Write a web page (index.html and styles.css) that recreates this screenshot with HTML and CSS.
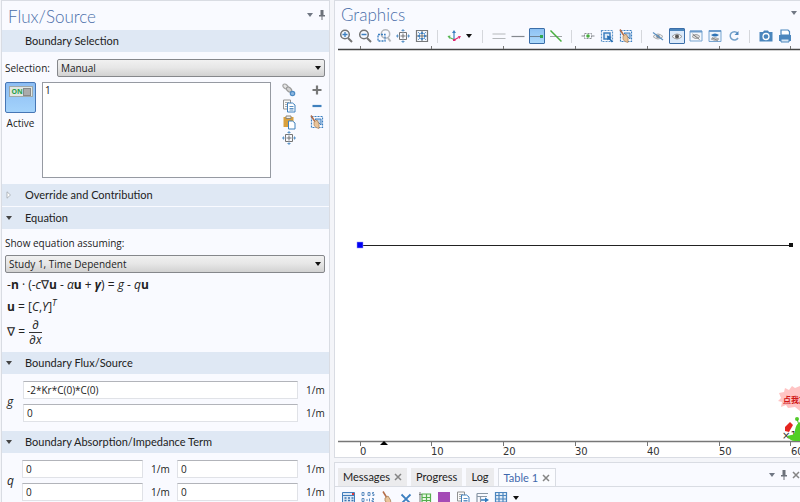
FILE: index.html
```
<!DOCTYPE html>
<html lang="en">
<head>
    <meta charset="UTF-8">
    <meta name="viewport" content="width=device-width, initial-scale=1.0">
    <title>Flux/Source</title>
    <link rel="stylesheet" href="styles.css">
</head>
<body>
    <!-- Icon set -->
    <svg class="icon-defs" aria-hidden="true">
        <symbol id="caret" viewBox="0 0 8 8"><path d="M1 2h6L4 6z" fill="currentColor"/></symbol>
        <symbol id="pin" viewBox="0 0 8 12"><path d="M2.500 1h3v5H7v1.500H1V6h1.500z" fill="#6c717a"/><path d="M4 7v4" stroke="#6c717a"/></symbol>
        <symbol id="close" viewBox="0 0 8 8"><path d="M1 1l6 6M7 1L1 7" stroke="#858585" stroke-width="1.500"/></symbol>
        <symbol id="closed" viewBox="0 0 8 8"><path d="M2 .8L5.500 4 2 7.200z" fill="#fff" stroke="#a2a8ae" stroke-width=".8"/></symbol>
        <symbol id="zoom-in" viewBox="0 0 16 16"><circle cx="7" cy="6.500" r="4.300" fill="#f5f9ff" stroke="#747474" stroke-width="1.500"/><path d="M10 10l4 4" stroke="#747474" stroke-width="2"/><path d="M4.500 6.500h5M7 4v5" stroke="#3c7fc0" stroke-width="1.300"/></symbol>
        <symbol id="zoom-out" viewBox="0 0 16 16"><circle cx="7" cy="6.500" r="4.300" fill="#f5f9ff" stroke="#747474" stroke-width="1.500"/><path d="M10 10l4 4" stroke="#747474" stroke-width="2"/><path d="M4.500 6.500h5" stroke="#3c7fc0" stroke-width="1.500"/></symbol>
        <symbol id="zoom-box" viewBox="0 0 16 16"><circle cx="9.500" cy="6" r="4.200" fill="none" stroke="#b4b7bb" stroke-width="1.500"/><path d="M12 10l2.500 3.500" stroke="#b4b7bb" stroke-width="2"/><path d="M2 6.500h7v6.500H2z" fill="none" stroke="#3c7fc0" stroke-width="1.300" stroke-dasharray="2 1"/></symbol>
        <symbol id="extents" viewBox="0 0 16 16"><path d="M4.500 4.500h7v7h-7zM8 5.500v5M5.500 8h5" fill="none" stroke="#747474"/><path d="M8 2.500v2M8 11.500v2M2.500 8h2M11.500 8h2" stroke="#9ab8d6"/><path d="M8 1l2 2H6zM8 15l-2-2h4zM1 8l2-2v4zM15 8l-2-2v4z" fill="#5d95ca"/></symbol>
        <symbol id="fit" viewBox="0 0 16 16"><path d="M2.500 2.500h11v11h-11z" fill="#f4f8fd" stroke="#77797c" stroke-width="1.200"/><path d="M8 3v10M3 8h10" stroke="#747474"/><path d="M8 3.500L10 6H6zM8 12.500L6 10h4zM3.500 8L6 6v4zM12.500 8L10 6v4z" fill="#3c7fc0"/><path d="M4 4l2 2M12 4l-2 2M4 12l2-2M12 12l-2-2" stroke="#6f9dcd"/></symbol>
        <symbol id="axes" viewBox="0 0 16 16"><path d="M8 11V4" stroke="#3c7fc0" stroke-width="1.200"/><path d="M8 2l2 3H6z" fill="#3c7fc0"/><path d="M8 11.500L3.500 9.500" stroke="#58b653" stroke-width="1.200"/><path d="M1.500 8l3-.5-1 3.500z" fill="#58b653"/><path d="M8 12l4.500-2.500" stroke="#e02771" stroke-width="1.200"/><path d="M15 8l-3.200.2 1.500 2.800zM7 11h2.500v2H7z" fill="#e02771"/></symbol>
        <symbol id="lines" viewBox="0 0 16 16"><path d="M1.500 6h13M1.500 10.500h13" stroke="#b5b8bb" stroke-width="1.200"/></symbol>
        <symbol id="line" viewBox="0 0 16 16"><path d="M1.500 8.500h13" stroke="#85898e" stroke-width="1.200"/></symbol>
        <symbol id="line-end" viewBox="0 0 14 14"><path d="M0 7.500h11" stroke="#6d8296"/><rect x="10" y="6" width="3" height="3" fill="#32a852"/></symbol>
        <symbol id="line-cut" viewBox="0 0 16 16"><path d="M2 8.500h12" stroke="#a0a4a7"/><path d="M2.500 2.500l11 11" stroke="#48ae3f" stroke-width="1.500"/></symbol>
        <symbol id="select-point" viewBox="0 0 16 16"><path d="M1.500 8h3M11.500 8h3" stroke="#85898e"/><path d="M4.500 5.500h7v5h-7z" fill="none" stroke="#8b8e92" stroke-dasharray="2 1"/><circle cx="8" cy="8" r="1.800" fill="#48ae3f"/></symbol>
        <symbol id="select-box" viewBox="0 0 16 16"><path d="M2.500 2.500h11v11h-11z" fill="none" stroke="#5f95cb" stroke-width="1.200" stroke-dasharray="2 1"/><path d="M5 5h6v6H5z" fill="#dce9f6" stroke="#3c7fc0" stroke-width="1.500"/><path d="M8 7.500l5 1.500-2 1 3 3.500-1.200 1-3-3.500-1.300 1.500z" fill="#286fb3"/></symbol>
        <symbol id="select-clear" viewBox="0 0 16 16"><path d="M2.500 2.500h11v11h-11z" fill="none" stroke="#3c7fc0" stroke-width="1.200" stroke-dasharray="2 1"/><path d="M6 5h6v6z" fill="#bcd4ed" stroke="#3c7fc0"/><path d="M2 1.500l4.500 7" stroke="#b46c47" stroke-width="1.500"/><path d="M5 8l3-2q3 3.500 2 8.500-3-.5-5-3z" fill="#e9c49a" stroke="#a98159" stroke-width=".7"/></symbol>
        <symbol id="hide" viewBox="0 0 16 16"><path d="M3 8.500q5-5 10 0-5 5-10 0z" fill="#e9eaec" stroke="#a9acb0"/><circle cx="8" cy="8.500" r="1.800" fill="#8b8e92"/><path d="M3 4.500l10 7.500" stroke="#5c91c3" stroke-width="1.200"/></symbol>
        <symbol id="show" viewBox="0 0 14 14"><path d="M0 1h14" stroke="#4c86bd" stroke-width="2"/><path d="M2 7.500q5-5 10 0-5 5-10 0z" fill="#f1f2f3" stroke="#888" stroke-width=".8"/><circle cx="7" cy="7.500" r="2" fill="#555"/></symbol>
        <symbol id="show-hidden" viewBox="0 0 16 16"><path d="M2 3h12v10H2z" fill="#f5f8fc" stroke="#78a5d1"/><path d="M2 3.500h12" stroke="#6b9bcb" stroke-width="2"/><path d="M4 8.500q4-4 8 0-4 4-8 0z" fill="#ddd" stroke="#a0a0a0"/><path d="M4.500 6l7 5.500" stroke="#777"/></symbol>
        <symbol id="show-both" viewBox="0 0 16 16"><path d="M2 2.500h12v11H2z" fill="#edf4fb" stroke="#78a5d1"/><path d="M2 3h12" stroke="#6b9bcb" stroke-width="2"/><path d="M4 7q4-3 8 0-4 3-8 0z" fill="#2e73b5"/><path d="M4 11q4-3 8 0-4 3-8 0z" fill="#ccc" stroke="#999" stroke-width=".7"/><path d="M5 9.500l6 3.500" stroke="#777" stroke-width=".8"/></symbol>
        <symbol id="refresh" viewBox="0 0 16 16"><path d="M11.500 5A4.200 4.200 0 1 0 12 10" fill="none" stroke="#74a1ca" stroke-width="1.500"/><path d="M12.500 3v4h-4z" fill="#5089bf"/></symbol>
        <symbol id="camera" viewBox="0 0 16 16"><path d="M1.500 4H5l1-1.500h4L11 4h3.500v9.500h-13z" fill="#4b86bd"/><circle cx="8" cy="8.500" r="3" fill="#4b86bd" stroke="#fff" stroke-width="1.300"/></symbol>
        <symbol id="printer" viewBox="0 0 16 16"><path d="M4 7V2h7l1.500 1.500V7z" fill="#fff" stroke="#4b86bd" stroke-width="1.200"/><path d="M2 7h12v6H2z" fill="#4b86bd"/><path d="M4 11h8v3H4z" fill="#d9e8f6" stroke="#4b86bd"/></symbol>
        <symbol id="chain" viewBox="0 0 16 16"><ellipse cx="4.500" cy="4.500" rx="3" ry="2" transform="rotate(40 4.500 4.500)" fill="#e4e4e4" stroke="#a4a4a4" stroke-width="1.200"/><ellipse cx="8" cy="7.500" rx="3" ry="2" transform="rotate(40 8 7.500)" fill="#d2d2d2" stroke="#9a9a9a" stroke-width="1.200"/><circle cx="11.500" cy="11.500" r="2.200" fill="#8db6df" stroke="#4d8bc4" stroke-width="1.200"/></symbol>
        <symbol id="copy" viewBox="0 0 16 16"><path d="M2.500 2h7v9h-7z" fill="#fafafa" stroke="#929292"/><path d="M4 4.500h4M4 6.500h3M4 8.500h3" stroke="#aaa"/><path d="M6.500 5h5l2.500 2v7H6.500z" fill="#fff" stroke="#3f80bd"/><path d="M8.500 8.500h4M8.500 10.500h4M8.500 12h4" stroke="#5d91c4"/></symbol>
        <symbol id="paste" viewBox="0 0 16 16"><path d="M2.500 3h10v10h-10z" fill="#d9a03d"/><path d="M5 2h5v2.500H5z" fill="#eee" stroke="#8d8577"/><path d="M7.500 7h4l2.500 2v6H7.500z" fill="#fff" stroke="#3f80bd"/></symbol>
        <symbol id="plus" viewBox="0 0 16 16"><path d="M8 3.500v9M3.500 8h9" stroke="#777" stroke-width="2.200"/></symbol>
        <symbol id="minus" viewBox="0 0 16 16"><path d="M3.500 8h9" stroke="#3f80bd" stroke-width="2.200"/></symbol>
        <symbol id="calc" viewBox="0 0 16 16"><path d="M1.500 2.500h12v12h-12z" fill="#dce8f5" stroke="#427ebb"/><path d="M2 5.500h11" stroke="#427ebb"/><path d="M3.500 8h2M7 8h2M10.500 8h2M3.500 10.500h2M7 10.500h2M10.500 10.500h2" stroke="#3c74b0" stroke-width="1.500"/><path d="M11 3h2v2h-2z" fill="#e03b3b"/></symbol>
        <symbol id="digits" viewBox="0 0 16 16"><path d="M2 2.500h2v3H2zM8 2.500h2v3H8zM12.500 2.500H14M12.500 2.500V4H14v1.500h-1.500M2 8.500h2v3H2zM6 10h2M9.500 8.500v3M12 8.500h1.500V10H12v1.500h2" fill="none" stroke="#5b8cc0"/></symbol>
        <symbol id="broom" viewBox="0 0 16 16"><path d="M4 1.500l4 6.500" stroke="#b46c47" stroke-width="1.500"/><path d="M6 8l3-2q3.500 4 3 8-3.500 0-6-3z" fill="#e9c49a" stroke="#a98159" stroke-width=".8"/></symbol>
        <symbol id="delete" viewBox="0 0 16 16"><path d="M3.500 4.500l9 9M12.500 4.500l-9 9" stroke="#3c7fc0" stroke-width="1.800"/></symbol>
        <symbol id="table-graph" viewBox="0 0 16 16"><path d="M3 2v12M2 4.500h3" stroke="#777"/><path d="M5 4h8.500v10H5zM9.500 4v10M5 7.500h8M5 10.500h8" fill="#eaf8e7" stroke="#54ae4d" stroke-width="1.200"/></symbol>
        <symbol id="purple" viewBox="0 0 16 16"><path d="M2 2h12v14H2z" fill="#a44bb6"/></symbol>
        <symbol id="export" viewBox="0 0 16 16"><path d="M3 3.500h11M3 3.500v11M3 6.500h10M6.500 6.500v8h4" fill="none" stroke="#8997a6" stroke-width="1.200"/><path d="M7 10h5" stroke="#2f79bd" stroke-width="1.500"/><path d="M11 7.500l4 2.500-4 2.500z" fill="#2f79bd"/></symbol>
        <symbol id="grid" viewBox="0 0 16 16"><path d="M2.500 2.500h11v12h-11zM6 2.500v12M10 2.500v12M2 5.500h12M2 9h12M2 12h12" fill="#e4eef8" stroke="#4d86bf" stroke-width="1.200"/></symbol>
    </svg>

    <main class="workspace">
        <!-- Settings -->
        <section class="panel settings">
            <header class="panel-head">
                <h1 class="panel-title">Flux/Source</h1>
                <div class="panel-tools">
                    <button class="mini" aria-label="Panel menu"><svg class="small"><use href="#caret"/></svg></button>
                    <button class="mini" aria-label="Pin"><svg class="pin"><use href="#pin"/></svg></button>
                </div>
            </header>

            <h2 class="section-head"><span class="section-text">Boundary Selection</span></h2>
            <div class="selection">
                <div class="selection-row">
                    <label for="selection">Selection:</label>
                    <div class="combo">
                        <select id="selection"><option>Manual</option></select>
                    </div>
                </div>
                <div class="selection-body">
                    <div class="active">
                        <button class="toggle" id="active" aria-pressed="true" aria-labelledby="active-label"><span class="switch">ON<span class="knob"></span></span></button>
                        <label for="active" id="active-label">Active</label>
                    </div>
                    <select class="list" size="6" aria-label="Selected boundaries"><option>1</option></select>
                    <div class="list-tools">
                        <button class="tool" aria-label="Activate selection"><svg><use href="#chain"/></svg></button>
                        <button class="tool" aria-label="Add"><svg><use href="#plus"/></svg></button>
                        <button class="tool" aria-label="Copy"><svg><use href="#copy"/></svg></button>
                        <button class="tool" aria-label="Remove"><svg><use href="#minus"/></svg></button>
                        <button class="tool" aria-label="Paste"><svg><use href="#paste"/></svg></button>
                        <button class="tool" aria-label="Clear"><svg><use href="#select-clear"/></svg></button>
                        <button class="tool" aria-label="Zoom to selection"><svg><use href="#extents"/></svg></button>
                    </div>
                </div>
            </div>

            <h2 class="section-head"><button class="section-toggle" aria-expanded="false"><svg class="small"><use href="#closed"/></svg>Override and Contribution</button></h2>
            <h2 class="section-head"><button class="section-toggle" aria-expanded="true"><svg class="small"><use href="#caret"/></svg>Equation</button></h2>
            <div class="equation">
                <label for="study">Show equation assuming:</label>
                <div class="combo">
                    <select id="study"><option>Study 1, Time Dependent</option></select>
                </div>
                <div class="math"><span>-<b>n</b> · (-<i>c</i>∇<b>u</b> - <i>α</i><b>u</b> + <i><b>γ</b></i>) = <i>g</i> - <i>q</i><b>u</b></span></div>
                <div class="math"><span><b>u</b> = [<i>C</i>,<i>Y</i>]<sup><i>T</i></sup></span></div>
                <div class="math nabla"><span>∇ =</span><span class="fraction"><i>∂</i><i class="under">∂x</i></span></div>
            </div>

            <h2 class="section-head"><button class="section-toggle" aria-expanded="true"><svg class="small"><use href="#caret"/></svg>Boundary Flux/Source</button></h2>
            <div class="fields one">
                <i class="symbol">g</i>
                <input type="text" id="g1" aria-label="g, first" value="-2*Kr*C(0)*C(0)"><label for="g1">1/m</label>
                <input type="text" id="g2" aria-label="g, second" value="0"><label for="g2">1/m</label>
            </div>

            <h2 class="section-head"><button class="section-toggle" aria-expanded="true"><svg class="small"><use href="#caret"/></svg>Boundary Absorption/Impedance Term</button></h2>
            <div class="fields two">
                <i class="symbol">q</i>
                <input type="text" id="q11" aria-label="q 11" value="0"><label for="q11">1/m</label>
                <input type="text" id="q12" aria-label="q 12" value="0"><label for="q12">1/m</label>
                <input type="text" id="q21" aria-label="q 21" value="0"><label for="q21">1/m</label>
                <input type="text" id="q22" aria-label="q 22" value="0"><label for="q22">1/m</label>
            </div>
        </section>

        <div class="side">
            <!-- Graphics -->
            <section class="panel graphics">
                <header class="panel-head">
                    <h1 class="panel-title">Graphics</h1>
                    <div class="panel-tools">
                        <button class="mini" aria-label="Panel menu"><svg class="small"><use href="#caret"/></svg></button>
                    </div>
                </header>
                <div class="toolbar">
                    <button class="tool" aria-label="Zoom in"><svg><use href="#zoom-in"/></svg></button>
                    <button class="tool" aria-label="Zoom out"><svg><use href="#zoom-out"/></svg></button>
                    <button class="tool" aria-label="Zoom box"><svg><use href="#zoom-box"/></svg></button>
                    <button class="tool" aria-label="Zoom selected"><svg><use href="#extents"/></svg></button>
                    <button class="tool" aria-label="Zoom extents"><svg><use href="#fit"/></svg></button>
                    <span class="divider"></span>
                    <button class="tool" aria-label="View"><svg><use href="#axes"/></svg></button>
                    <button class="tool drop" aria-label="View menu"><svg class="small"><use href="#caret"/></svg></button>
                    <span class="divider"></span>
                    <button class="tool" aria-label="Select objects"><svg><use href="#lines"/></svg></button>
                    <button class="tool" aria-label="Select domains"><svg><use href="#line"/></svg></button>
                    <button class="tool filled" aria-label="Select boundaries" aria-pressed="true"><svg><use href="#line-end"/></svg></button>
                    <button class="tool" aria-label="Select none"><svg><use href="#line-cut"/></svg></button>
                    <span class="divider"></span>
                    <button class="tool" aria-label="Select point"><svg><use href="#select-point"/></svg></button>
                    <button class="tool" aria-label="Select box"><svg><use href="#select-box"/></svg></button>
                    <button class="tool" aria-label="Deselect box"><svg><use href="#select-clear"/></svg></button>
                    <span class="divider"></span>
                    <button class="tool" aria-label="Hide"><svg><use href="#hide"/></svg></button>
                    <button class="tool outlined" aria-label="View unhidden" aria-pressed="true"><svg><use href="#show"/></svg></button>
                    <button class="tool" aria-label="View hidden"><svg><use href="#show-hidden"/></svg></button>
                    <button class="tool" aria-label="View all"><svg><use href="#show-both"/></svg></button>
                    <button class="tool" aria-label="Reset hiding"><svg><use href="#refresh"/></svg></button>
                    <span class="divider"></span>
                    <button class="tool" aria-label="Image snapshot"><svg><use href="#camera"/></svg></button>
                    <button class="tool" aria-label="Print"><svg><use href="#printer"/></svg></button>
                </div>
                <svg class="plot" viewBox="0 0 465 411" role="img" aria-label="Interval from 0 to 60">
                    <path d="M0 4h465v407H0z" fill="#fff"/>
                    <path d="M3 3.500h462" stroke="#444" stroke-width="1.500"/>
                    <path d="M25.500 0v3M96.500 0v3M168.500 0v3M240.500 0v3M312.500 0v3M384.500 0v3M455.500 0v3" stroke="#777"/>
                    <path d="M25 199.500h431" stroke="#222"/>
                    <rect x="22" y="196" width="6" height="6" fill="#0000f5" stroke="#9a9af5" stroke-width=".5"/>
                    <rect x="454" y="197" width="4" height="4" fill="#111"/>
                    <path d="M3 395.500h462" stroke="#777" stroke-width="1.500"/>
                    <path d="M25.500 396v4M96.500 396v4M168.500 396v4M240.500 396v4M312.500 396v4M384.500 396v4M455.500 396v4" stroke="#777"/>
                    <path d="M49 395l-4 4h8z" fill="#000"/>
                    <g class="ticks">
                        <text x="25" y="409">0</text>
                        <text x="96" y="409">10</text>
                        <text x="168" y="409">20</text>
                        <text x="240" y="409">30</text>
                        <text x="312" y="409">40</text>
                        <text x="384" y="409">50</text>
                        <text x="456" y="409">60</text>
                        <text x="447" y="393">×1</text>
                    </g>
                    <!-- mascot -->
                    <path d="M444 347l5-1 1-4 4 2 3-4 3 2 5-2v25l-5-4-7 1-2-3-5 2 1-5-4-1 3-3z" fill="#ffc4c4"/>
                    <text class="bubble" x="448" y="357">点我加</text>
                    <path d="M450 381l5-5 3 3-4 7-4-1z" fill="#e52520"/>
                    <circle cx="462" cy="373" r="2" fill="#55cb2c"/>
                    <path d="M462 373l2 6" stroke="#48be20"/>
                    <path d="M465 376q-4 2-5 8 0 5-4 5l-4 1q3 5 8 5h5z" fill="#52cf25"/>
                </svg>
            </section>

            <!-- Results -->
            <section class="panel results">
                <div class="tabs">
                    <button class="tab">Messages<svg class="small"><use href="#close"/></svg></button>
                    <button class="tab">Progress</button>
                    <button class="tab">Log</button>
                    <button class="tab current">Table 1<svg class="small"><use href="#close"/></svg></button>
                    <div class="tab-tools">
                        <button class="mini" aria-label="Panel menu"><svg class="small"><use href="#caret"/></svg></button>
                        <button class="mini" aria-label="Pin"><svg class="pin"><use href="#pin"/></svg></button>
                        <button class="mini" aria-label="Close"><svg class="small"><use href="#close"/></svg></button>
                    </div>
                </div>
                <div class="toolbar">
                    <button class="tool" aria-label="Evaluate"><svg><use href="#calc"/></svg></button>
                    <button class="tool" aria-label="Precision"><svg><use href="#digits"/></svg></button>
                    <button class="tool" aria-label="Clear table"><svg><use href="#broom"/></svg></button>
                    <button class="tool" aria-label="Delete table"><svg><use href="#delete"/></svg></button>
                    <button class="tool" aria-label="Table graph"><svg><use href="#table-graph"/></svg></button>
                    <button class="tool" aria-label="Table surface"><svg><use href="#purple"/></svg></button>
                    <button class="tool" aria-label="Copy table"><svg><use href="#copy"/></svg></button>
                    <button class="tool" aria-label="Export"><svg><use href="#export"/></svg></button>
                    <button class="tool" aria-label="Display table"><svg><use href="#grid"/></svg></button>
                    <button class="tool drop" aria-label="Table menu"><svg class="small"><use href="#caret"/></svg></button>
                </div>
            </section>
        </div>
    </main>
</body>
</html>
```

FILE: styles.css
```
/* Base */
* {
    margin: 0;
    padding: 0;
    box-sizing: border-box;
}

body {
    height: 100vh;
    overflow: hidden;
    background: #f4f5f9;
    color: #222;
    font-family: "Open Sans", "Noto Sans", "Noto Sans CJK SC", sans-serif;
    font-size: 10px;
    line-height: 14px;
}

button,
input,
select {
    font: inherit;
    color: inherit;
}

button {
    border: 0;
    background: none;
}

svg {
    display: block;
    width: 16px;
    height: 16px;
}

.icon-defs {
    display: none;
}

.small {
    width: 8px;
    height: 8px;
    flex: none;
}

.pin {
    width: 8px;
    height: 12px;
}

/* Panels */
.workspace {
    display: grid;
    grid-template-columns: minmax(0, 33fr) minmax(0, 47fr);
    height: 100%;
}

.panel {
    background: #f9faff;
    border: 1px solid #d9dce3;
}

.settings {
    margin-left: 1px;
    overflow: hidden;
}

.side {
    display: flex;
    flex-direction: column;
    gap: 4px;
    padding-left: 4px;
    min-width: 0;
}

.side .panel {
    border-right: 0;
}

.panel-head {
    display: flex;
    align-items: center;
    justify-content: space-between;
    height: 29px;
    padding: 2px 3px 0 6px;
}

.graphics .panel-head {
    height: 26px;
    padding-right: 2px;
}

.panel-title {
    color: #4a6ea9;
    font-family: Lato, "Open Sans", sans-serif;
    font-size: 17px;
    font-weight: 300;
    line-height: 22px;
}

.panel-tools,
.tab-tools {
    display: flex;
    align-items: center;
    gap: 4px;
    color: #707783;
}

.panel-tools {
    padding-bottom: 4px;
}

/* Sections */
.section-head {
    display: flex;
    align-items: center;
    height: 22px;
    background: #dfe8f4;
    font-family: Lato, "Open Sans", sans-serif;
    font-size: 11px;
    font-weight: 400;
}

.section-head + .section-head {
    margin-top: 1px;
}

.section-text {
    padding-left: 23px;
}

.section-toggle {
    display: flex;
    align-items: center;
    gap: 12px;
    width: 100%;
    padding-left: 3px;
}

.section-toggle .small {
    color: #444;
}

/* Combo box */
.combo {
    position: relative;
    flex: 1;
}

.combo::after {
    content: "";
    position: absolute;
    top: 7px;
    right: 4px;
    border: 3px solid transparent;
    border-top: 4px solid #111;
    border-bottom: 0;
    pointer-events: none;
}

.combo select {
    appearance: none;
    display: block;
    width: 100%;
    height: 18px;
    padding: 0 3px;
    border: 1px solid #85878b;
    border-radius: 2px;
    background: linear-gradient(#f1f1f1, #e6e6e6 50%, #d2d2d2);
}

/* Selection */
.selection {
    display: flex;
    flex-direction: column;
    gap: 5px;
    padding: 7px 4px 6px 3px;
}

.selection-row {
    display: flex;
    align-items: center;
    gap: 7px;
}

.selection-body {
    display: flex;
    gap: 6px;
}

.active {
    display: flex;
    flex-direction: column;
    align-items: center;
    gap: 3px;
}

.toggle {
    display: flex;
    justify-content: center;
    width: 31px;
    height: 31px;
    padding-top: 3px;
    border: 1px solid #4676b5;
    border-radius: 2px;
    background: linear-gradient(#8dbdf3, #a4d3fb);
}

.switch {
    display: flex;
    align-items: center;
    justify-content: space-between;
    width: 24px;
    height: 11px;
    padding: 0 1px 0 2px;
    border: 1px solid #a0a8a8;
    background: #e0e6e3;
    color: #27a04b;
    font-size: 7px;
    font-weight: 700;
}

.knob {
    width: 8px;
    height: 8px;
    border: 1px solid #888;
    background: #aaa;
}

.list {
    flex: 1;
    min-width: 0;
    height: 96px;
    border: 1px solid #969aa2;
    border-radius: 0;
    background: #fff;
    overflow: hidden;
}

.list option {
    min-height: 15px;
    padding: 0 2px;
}

.list-tools {
    display: grid;
    grid-template-columns: 16px 16px;
    grid-auto-rows: 16px;
    column-gap: 12px;
    padding-left: 4px;
}

/* Equation */
.equation {
    padding: 7px 4px 5px 3px;
}

.equation label {
    display: block;
    margin-bottom: 5px;
}

.math {
    display: flex;
    align-items: center;
    height: 21px;
    padding: 2px 0 0 2px;
    font-family: "Open Sans", "DejaVu Sans", sans-serif;
    font-size: 12px;
}

.math sup {
    font-size: 9px;
    line-height: 1;
}

.math.nabla {
    gap: 4px;
    height: 32px;
}

.fraction {
    display: flex;
    flex-direction: column;
    align-items: center;
    line-height: 14px;
}

.under {
    border-top: 1px solid #333;
}

/* Fields */
.fields {
    display: grid;
    align-items: center;
    row-gap: 5px;
    padding: 7px 0 9px 5px;
}

.fields.one {
    grid-template-columns: 16px minmax(0, 1fr) 31px;
}

.fields.two {
    grid-template-columns: 15px minmax(0, 1fr) 34px minmax(0, 1fr) 31px;
}

.symbol {
    grid-row: span 2;
    font-size: 12px;
}

.fields input {
    width: 100%;
    height: 18px;
    padding: 0 3px;
    border: 1px solid #e0e2e7;
    border-top-color: #b2b4ba;
    background: #fff;
}

.fields label {
    padding-left: 8px;
}

/* Toolbars */
.toolbar {
    display: flex;
    align-items: center;
    gap: 3px;
    height: 19px;
    padding: 0 0 1px 3px;
    overflow: hidden;
}

.tool {
    flex: none;
    width: 16px;
    height: 16px;
}

.tool.drop {
    width: 10px;
    color: #111;
}

.tool.filled,
.tool.outlined {
    border: 1px solid #3b6ea9;
    border-radius: 1px;
    overflow: hidden;
}

.tool.filled svg,
.tool.outlined svg {
    width: 14px;
    height: 14px;
}

.tool.filled {
    background: linear-gradient(#8dc1f3, #addafc);
}

.tool.outlined {
    background: #dceafa;
}

.divider {
    flex: none;
    width: 1px;
    height: 13px;
    margin: 0 5px 0 4px;
    background: #d5d7dc;
}

/* Plot */
.plot {
    width: 100%;
    height: auto;
}

.ticks {
    fill: #333;
    font-family: "DejaVu Sans", sans-serif;
    font-size: 10px;
}

.bubble {
    fill: #d01818;
    font-family: "Noto Sans CJK SC", sans-serif;
    font-size: 8px;
    font-weight: 700;
}

/* Results */
.results {
    flex: 1;
    min-height: 0;
    overflow: hidden;
}

.tabs {
    display: flex;
    align-items: flex-end;
    gap: 4px;
    height: 24px;
    padding-left: 3px;
    border-bottom: 1px solid #d9dce3;
    overflow: hidden;
}

.tab {
    display: flex;
    align-items: center;
    gap: 4px;
    height: 18px;
    padding: 0 5px;
    background: #ebebed;
    font-family: Lato, "Open Sans", sans-serif;
    font-size: 11px;
}

.tab.current {
    border: 1px solid #d9dce3;
    border-bottom: 0;
    background: #fbfcff;
    color: #3f68ac;
}

.tab-tools {
    flex: 1;
    align-self: center;
    justify-content: flex-end;
}

.results .toolbar {
    height: 22px;
    padding: 0 0 0 6px;
}
```
